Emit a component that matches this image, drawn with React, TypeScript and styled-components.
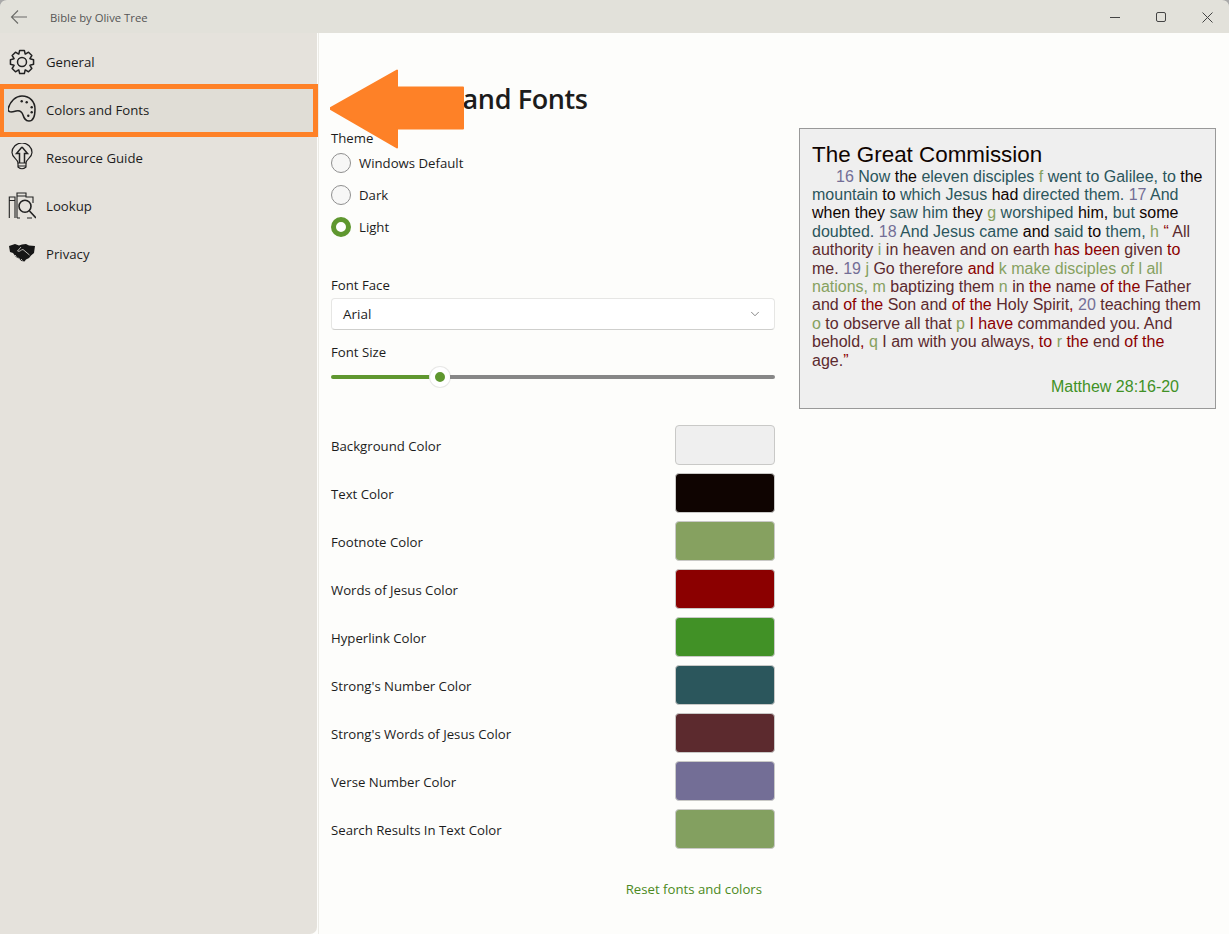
import React from 'react';
import styled, { createGlobalStyle } from 'styled-components';
import { ChevronDown } from 'lucide-react';

const GlobalStyle = createGlobalStyle`
  html, body {
    margin: 0;
    padding: 0;
    height: 100%;
    background: #a9a9a9;
  }
  body {
    font-family: "Open Sans", "Noto Sans", sans-serif;
    color: #1c1c1c;
  }
  * {
    box-sizing: border-box;
  }
`;

const COLORS = {
  verse: '#736e96',
  strong: '#2b565c',
  footnote: '#86a160',
  jesus: '#8b0000',
  strongJesus: '#5c2a2e',
  link: '#419126',
  text: '#0f0401',
};

const swatches = [
  { label: 'Background Color', color: '#efefef' },
  { label: 'Text Color', color: COLORS.text },
  { label: 'Footnote Color', color: COLORS.footnote },
  { label: 'Words of Jesus Color', color: COLORS.jesus },
  { label: 'Hyperlink Color', color: COLORS.link },
  { label: "Strong's Number Color", color: COLORS.strong },
  { label: "Strong's Words of Jesus Color", color: COLORS.strongJesus },
  { label: 'Verse Number Color', color: COLORS.verse },
  { label: 'Search Results In Text Color', color: '#83a060' },
];

// 8 tooth gear outline around (14,15)
const gearPath = () => {
  const pts: string[] = [];
  for (let i = 0; i < 8; i++) {
    const a = (i * Math.PI) / 4;
    const at = (r: number, d: number) =>
      `${(14 + r * Math.cos(a + d)).toFixed(2)} ${(15 + r * Math.sin(a + d)).toFixed(2)}`;
    pts.push(at(8.6, -0.38), at(11.8, -0.2), at(11.8, 0.2), at(8.6, 0.38));
  }
  return `M${pts.join('L')}Z`;
};

const GearIcon = () => (
  <NavSvg viewBox="0 0 28 30" strokeWidth="1.5" strokeLinejoin="round">
    <path d={gearPath()} />
    <circle cx="14" cy="15" r="4.500" />
  </NavSvg>
);

const PaletteIcon = () => (
  <NavSvg viewBox="1 1 28 30" strokeWidth="1.500">
    <path d="M1 15C3 7 9 2 15 2c8 0 13 6 13 13s-2 12-6 12-5-3-6-6-3-5-7-4-8 2-8-2z" />
    <g fill="#222" stroke="none">
      <circle cx="14.700" cy="7.300" r="1.200" />
      <circle cx="19.700" cy="8.300" r="1.200" />
      <circle cx="24.700" cy="13.300" r="1.200" />
      <circle cx="24.700" cy="18.300" r="1.200" />
      <circle cx="21.300" cy="21.700" r="1.200" />
    </g>
  </NavSvg>
);

const BulbIcon = () => (
  <NavSvg viewBox="0 0 28 30" strokeWidth="1.200">
    <path d="M10 20C10 16 4 15 4 9.500a10 9.500 0 0 1 20 0C24 15 18 16 18 20z" />
    <path d="M14 4l-5.500 6.500h3V20M16.500 20v-9.500h3L14 4" strokeWidth="1.500" />
    <path d="M10 20v4q4 3.500 8 0v-4M10 23h8" />
  </NavSvg>
);

const LookupIcon = () => (
  <NavSvg viewBox="0 0 28 30" strokeWidth="1.100">
    <path d="M1.300 27V6H7v21M1.300 9.500H7" />
    <path d="M9 27V2h9v4h7v6M9 5h9" />
    <path d="M9 27h3M19 27h5" />
    <circle cx="17" cy="15.300" r="6" strokeWidth="1.600" />
    <path d="M21.500 20l6.500 7" strokeWidth="1.600" />
  </NavSvg>
);

const HandshakeIcon = () => (
  <NavSvg viewBox="0 0 28 30" strokeWidth="0.800">
    <path
      fill="#161616"
      stroke="none"
      d="M1 7l6-2 4 1.500L14 5.500 18 5l3 1.500L27 7l-1 7-3 2.500-2 2.500-3 1.500-1.500 2-3-.5-2-2-3.500-2-3-4L2 13z"
    />
    <path stroke="#e5e2dc" d="M13 8l-3.500 4c2 1.500 3.500-1.500 5.500-1.500l6.500 5.500M7 16l1.500 1.500M10 18.500l1.500 1.500M13 20l1.500 1.500" />
  </NavSvg>
);

const ArrowBackIcon = () => (
  <svg width="18" height="16" viewBox="0 0 18 16" fill="none" stroke="#6b6b68" strokeWidth="1.100">
    <path d="M17 8H1.500M8 1.500L1.500 8 8 14.500" />
  </svg>
);

const App: React.FC = () => {
  return (
    <>
      <GlobalStyle />
      <Window>
        <TitleBar>
          <BackButton><ArrowBackIcon /></BackButton>
          <AppTitle>Bible by Olive Tree</AppTitle>
          <WindowControls>
            <MinimizeGlyph />
            <MaximizeGlyph />
            <svg width="11" height="11" viewBox="0 0 11 11" stroke="#444" strokeWidth="1">
              <path d="M.5.500l10 10M10.500.500l-10 10" />
            </svg>
          </WindowControls>
        </TitleBar>
        <Body>
          <Sidebar>
            <NavItem>
              <NavIcon><GearIcon /></NavIcon>
              General
            </NavItem>
            <NavItem $selected>
              <NavIcon><PaletteIcon /></NavIcon>
              Colors and Fonts
            </NavItem>
            <NavItem>
              <NavIcon><BulbIcon /></NavIcon>
              Resource Guide
            </NavItem>
            <NavItem>
              <NavIcon><LookupIcon /></NavIcon>
              Lookup
            </NavItem>
            <NavItem>
              <NavIcon><HandshakeIcon /></NavIcon>
              Privacy
            </NavItem>
          </Sidebar>
          <Main>
            <PageTitle>Colors and Fonts</PageTitle>
            <CalloutArrow width="136" height="80" viewBox="0 0 136 80">
              <path
                d="M0 39.500L67 1.500v17h66v41H67v19z"
                fill="#fe8127"
                stroke="#fe8127"
                strokeWidth="2"
                strokeLinejoin="round"
              />
            </CalloutArrow>
            <Columns>
              <Form>
                <ThemeLabel>Theme</ThemeLabel>
                <RadioGroup>
                  <RadioRow><RadioCircle />Windows Default</RadioRow>
                  <RadioRow><RadioCircle />Dark</RadioRow>
                  <RadioRow><RadioCircle $checked />Light</RadioRow>
                </RadioGroup>
                <FontFaceLabel>Font Face</FontFaceLabel>
                <Select>
                  Arial
                  <ChevronDown size={14} strokeWidth={1.2} color="#555" />
                </Select>
                <FontSizeLabel>Font Size</FontSizeLabel>
                <Slider>
                  <SliderFill />
                  <SliderThumb />
                  <SliderTrack />
                </Slider>
                <SwatchList>
                  {swatches.map((s) => (
                    <SwatchRow key={s.label}>
                      <SwatchLabel>{s.label}</SwatchLabel>
                      <Swatch $color={s.color} />
                    </SwatchRow>
                  ))}
                </SwatchList>
                <ResetLink>Reset fonts and colors</ResetLink>
              </Form>
              <Preview>
                <PreviewTitle>The Great Commission</PreviewTitle>
                <PreviewText>
                  <Verse $indent>16</Verse> <S>Now</S> the <S>eleven disciples</S> <F>f</F> <S>went to Galilee, to</S> the{' '}
                  <S>mountain</S> to <S>which Jesus</S> had <S>directed them.</S> <V>17</V> <S>And</S>{' '}
                  when they <S>saw him</S> they <F>g</F> <S>worshiped</S> him, <S>but</S> some{' '}
                  <S>doubted.</S> <V>18</V> <S>And Jesus came</S> and <S>said</S> to <S>them,</S> <F>h</F> <J>“</J> <SJ>All</SJ>{' '}
                  <SJ>authority</SJ> <F>i</F> <SJ>in heaven and on earth</SJ> <J>has been</J> <SJ>given</SJ> <J>to</J>{' '}
                  <SJ>me.</SJ> <V>19</V> <F>j</F> <SJ>Go therefore</SJ> <J>and</J> <F>k</F> <F>make disciples of</F> <F>l</F> <F>all</F>{' '}
                  <F>nations,</F> <F>m</F> <SJ>baptizing them</SJ> <F>n</F> <SJ>in</SJ> <J>the</J> <SJ>name</SJ> <J>of the</J> <SJ>Father</SJ>{' '}
                  <SJ>and</SJ> <J>of the</J> <SJ>Son and</SJ> <J>of the</J> <SJ>Holy Spirit</SJ><J>,</J> <V>20</V> <SJ>teaching them</SJ>{' '}
                  <F>o</F> <SJ>to observe all that</SJ> <F>p</F> <J>I have</J> <SJ>commanded you. And</SJ>{' '}
                  <SJ>behold</SJ><J>,</J> <F>q</F> <SJ>I am with you always</SJ><J>,</J> <J>to</J> <F>r</F> <J>the</J> <SJ>end</SJ> <J>of the</J>{' '}
                  <SJ>age.</SJ><J>”</J>
                </PreviewText>
                <Reference>Matthew 28:16-20</Reference>
              </Preview>
            </Columns>
          </Main>
        </Body>
      </Window>
    </>
  );
};

const NavSvg = styled.svg.attrs({ width: 28, height: 30, fill: 'none', stroke: '#222' })`
  display: block;
`;

const Window = styled.div`
  width: 1229px;
  height: 934px;
  padding-top: 1px;
  overflow: hidden;
  background: #e2e1da;
  border-radius: 7px 7px 0 0;
  display: flex;
  flex-direction: column;
`;

const TitleBar = styled.div`
  height: 32px;
  flex: none;
  display: flex;
  align-items: center;
  background: #e2e1da;
`;

const BackButton = styled.div`
  width: 50px;
  padding-left: 10px;
  display: flex;
  align-items: center;
`;

const AppTitle = styled.div`
  font-size: 11.300px;
  color: #555;
`;

const WindowControls = styled.div`
  margin-left: auto;
  width: 149px;
  padding: 0 16px 0 30px;
  display: flex;
  align-items: center;
  justify-content: space-between;
`;

const MinimizeGlyph = styled.div`
  width: 10px;
  height: 1px;
  background: #444;
`;

const MaximizeGlyph = styled.div`
  width: 10px;
  height: 10px;
  border: 1px solid #444;
  border-radius: 2px;
`;

const Body = styled.div`
  flex: 1;
  display: flex;
  min-height: 0;
  background: #fdfdfb;
`;

const Sidebar = styled.nav`
  width: 317px;
  flex: none;
  padding-top: 5px;
  background: #e5e2dc;
  border-bottom-right-radius: 7px;
`;

const NavItem = styled.div<{ $selected?: boolean }>`
  position: relative;
  height: 48px;
  display: flex;
  align-items: center;
  font-size: 13.200px;
  color: #1c1c1c;
  background: ${(p) => (p.$selected ? '#e0ddd6' : 'transparent')};

  ${(p) =>
    p.$selected &&
    `
    &::after {
      content: '';
      position: absolute;
      inset: -2px -1px -3px 0;
      border: 5px solid #fe8127;
      border-left-width: 4px;
      pointer-events: none;
    }
  `}
`;

const NavIcon = styled.div`
  width: 46px;
  padding-left: 8px;
  display: flex;
  align-items: center;
`;

const Main = styled.main`
  position: relative;
  flex: 1;
  margin-left: 1px;
  padding: 0 13px 0 12px;
  background: #fdfdfb;
  border-left: 1px solid #ecebe6;
`;

const PageTitle = styled.h1`
  margin: 46px 0 0 45px;
  font-size: 27px;
  letter-spacing: -0.400px;
  line-height: 40px;
  font-weight: 600;
  color: #1c1c1c;
`;

const CalloutArrow = styled.svg`
  position: absolute;
  left: 11px;
  top: 36px;
`;

const Columns = styled.div`
  display: grid;
  grid-template-columns: 444px 417px;
  column-gap: 24px;
  align-items: start;
  margin-top: 8px;
`;

const Form = styled.div`
  display: flex;
  flex-direction: column;
  font-size: 13.200px;
  color: #1c1c1c;
`;

const FieldLabel = styled.div`
  line-height: 20px;
`;

const ThemeLabel = styled(FieldLabel)`
  height: 20px;
  padding-top: 1px;
`;

const RadioGroup = styled.div`
  display: flex;
  flex-direction: column;
`;

const RadioRow = styled.div`
  height: 32px;
  display: flex;
  align-items: center;
  gap: 8px;
`;

const RadioCircle = styled.span<{ $checked?: boolean }>`
  width: 20px;
  height: 20px;
  border-radius: 50%;
  background: ${(p) => (p.$checked ? '#fff' : '#f7f7f6')};
  border: ${(p) => (p.$checked ? '5px solid #5f972f' : '1px solid #8f8f8f')};
`;

const FontFaceLabel = styled(FieldLabel)`
  margin-top: 32px;
`;

const Select = styled.div`
  height: 32px;
  margin-top: 3px;
  padding: 0 12px 0 11px;
  display: flex;
  align-items: center;
  justify-content: space-between;
  background: #fff;
  border: 1px solid #e6e6e4;
  border-bottom-color: #cfcfcd;
  border-radius: 4px;
  font-size: 13.500px;
`;

const FontSizeLabel = styled(FieldLabel)`
  margin-top: 12px;
`;

const Slider = styled.div`
  height: 20px;
  margin-top: 5px;
  display: flex;
  align-items: center;
`;

const SliderFill = styled.div`
  width: 99px;
  height: 4px;
  background: #5f972f;
  border-radius: 2px 0 0 2px;
`;

const SliderThumb = styled.div`
  width: 20px;
  height: 20px;
  flex: none;
  border-radius: 50%;
  background: #5f972f;
  border: 5px solid #fff;
  box-shadow: 0 0 0 1px #e8e8e6;
`;

const SliderTrack = styled.div`
  flex: 1;
  height: 4px;
  background: #878787;
  border-radius: 0 2px 2px 0;
`;

const SwatchList = styled.div`
  margin-top: 38px;
  display: flex;
  flex-direction: column;
  gap: 8px;
`;

const SwatchRow = styled.div`
  height: 40px;
  display: flex;
  align-items: center;
  justify-content: space-between;
`;

const SwatchLabel = styled.span`
  margin-top: 2px;
`;

const Swatch = styled.div<{ $color: string }>`
  width: 100px;
  height: 40px;
  background: ${(p) => p.$color};
  border: 1px solid #c9c9c7;
  border-radius: 4px;
`;

const ResetLink = styled.div`
  margin-top: 30px;
  padding-right: 13px;
  align-self: flex-end;
  line-height: 20px;
  color: #4c8a22;
`;

const Preview = styled.section`
  height: 281px;
  margin-top: 1px;
  padding: 13px 12px 0;
  background: #efefef;
  border: 1px solid #999;
  font-family: "Liberation Sans", Arial, sans-serif;
`;

const PreviewTitle = styled.div`
  font-size: 22.400px;
  line-height: 25.600px;
  color: ${COLORS.text};
`;

const PreviewText = styled.div`
  font-size: 16px;
  line-height: 18.400px;
  color: ${COLORS.text};
`;

const Verse = styled.span<{ $indent?: boolean }>`
  color: ${COLORS.verse};
  margin-left: ${(p) => (p.$indent ? '24px' : '0')};
`;

const V = styled.span`
  color: ${COLORS.verse};
`;

const S = styled.span`
  color: ${COLORS.strong};
`;

const F = styled.span`
  color: ${COLORS.footnote};
`;

const J = styled.span`
  color: ${COLORS.jesus};
`;

const SJ = styled.span`
  color: ${COLORS.strongJesus};
`;

const Reference = styled.div`
  margin-top: 8.200px;
  padding-right: 24px;
  text-align: right;
  font-size: 16px;
  line-height: 18px;
  color: ${COLORS.link};
`;

export default App;
